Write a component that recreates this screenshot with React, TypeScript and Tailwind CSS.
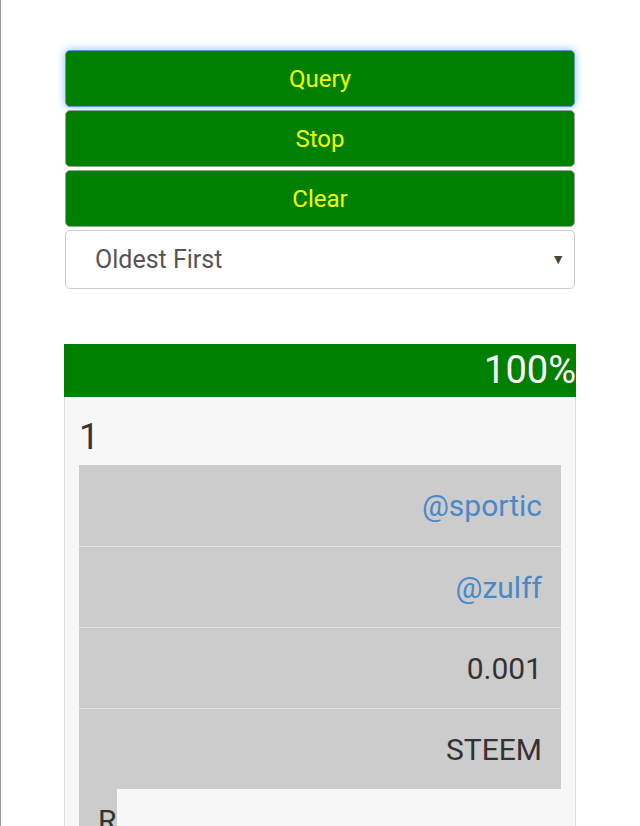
import React from 'react';

const rows = [
  { text: '@sportic', link: true },
  { text: '@zulff', link: true },
  { text: '0.001', link: false },
  { text: 'STEEM', link: false },
];

function GreenButton({ label, focused }: { label: string; focused?: boolean }) {
  return (
    <button
      className={
        focused
          ? 'h-[57px] w-full rounded-[5px] border border-[#5b9bd5] bg-[#008000] text-[24px] text-[#f2ff00] shadow-[0_0_8px_rgba(102,175,233,0.8)]'
          : 'h-[57px] w-full rounded-[5px] border border-[#9aa59a] bg-[#008000] text-[24px] text-[#f2ff00]'
      }
    >
      {label}
    </button>
  );
}

export default function App() {
  return (
    <div
      className="h-[826px] overflow-hidden border-l border-[#999] bg-white"
      style={{ fontFamily: 'Roboto, "Noto Sans", sans-serif' }}
    >
      <div className="ml-[63px] w-[512px] pt-[50px]">
        <div className="flex flex-col gap-[3px] px-px">
          <GreenButton label="Query" focused />
          <GreenButton label="Stop" />
          <GreenButton label="Clear" />
          <div className="flex h-[59px] items-center justify-between rounded-[5px] border border-[#ccc] bg-white pl-[29px] pr-[9px] text-[25px] text-[#555]">
            <span>Oldest First</span>
            <span className="text-[14px] text-[#444]">▼</span>
          </div>
        </div>

        <div className="mt-[55px] flex h-[53px] items-center justify-end bg-[#008000] text-[38px] text-white">
          100%
        </div>

        <div className="border border-t-0 border-[#ddd] bg-[#f7f7f7] px-[14px] pb-[40px]">
          <div className="pt-[18px] pb-[6px] text-[36px] leading-[44px] text-[#333]">1</div>
          <div className="bg-[#cccccc]">
            {rows.map((r, i) => (
              <div
                key={i}
                className={
                  'flex h-[81px] items-center justify-end pr-[19px] text-[30px] ' +
                  (i > 0 ? 'border-t border-[#e2e2e2] ' : '') +
                  (r.link ? 'text-[#4a89c8]' : 'text-[#333]')
                }
              >
                {r.text}
              </div>
            ))}
          </div>
          <div className="flex">
            <div className="h-[40px] w-[38px] bg-[#cccccc] pt-[14px] pl-[19px] text-[30px] leading-[36px] text-[#333]">R</div>
          </div>
        </div>
      </div>
    </div>
  );
}
